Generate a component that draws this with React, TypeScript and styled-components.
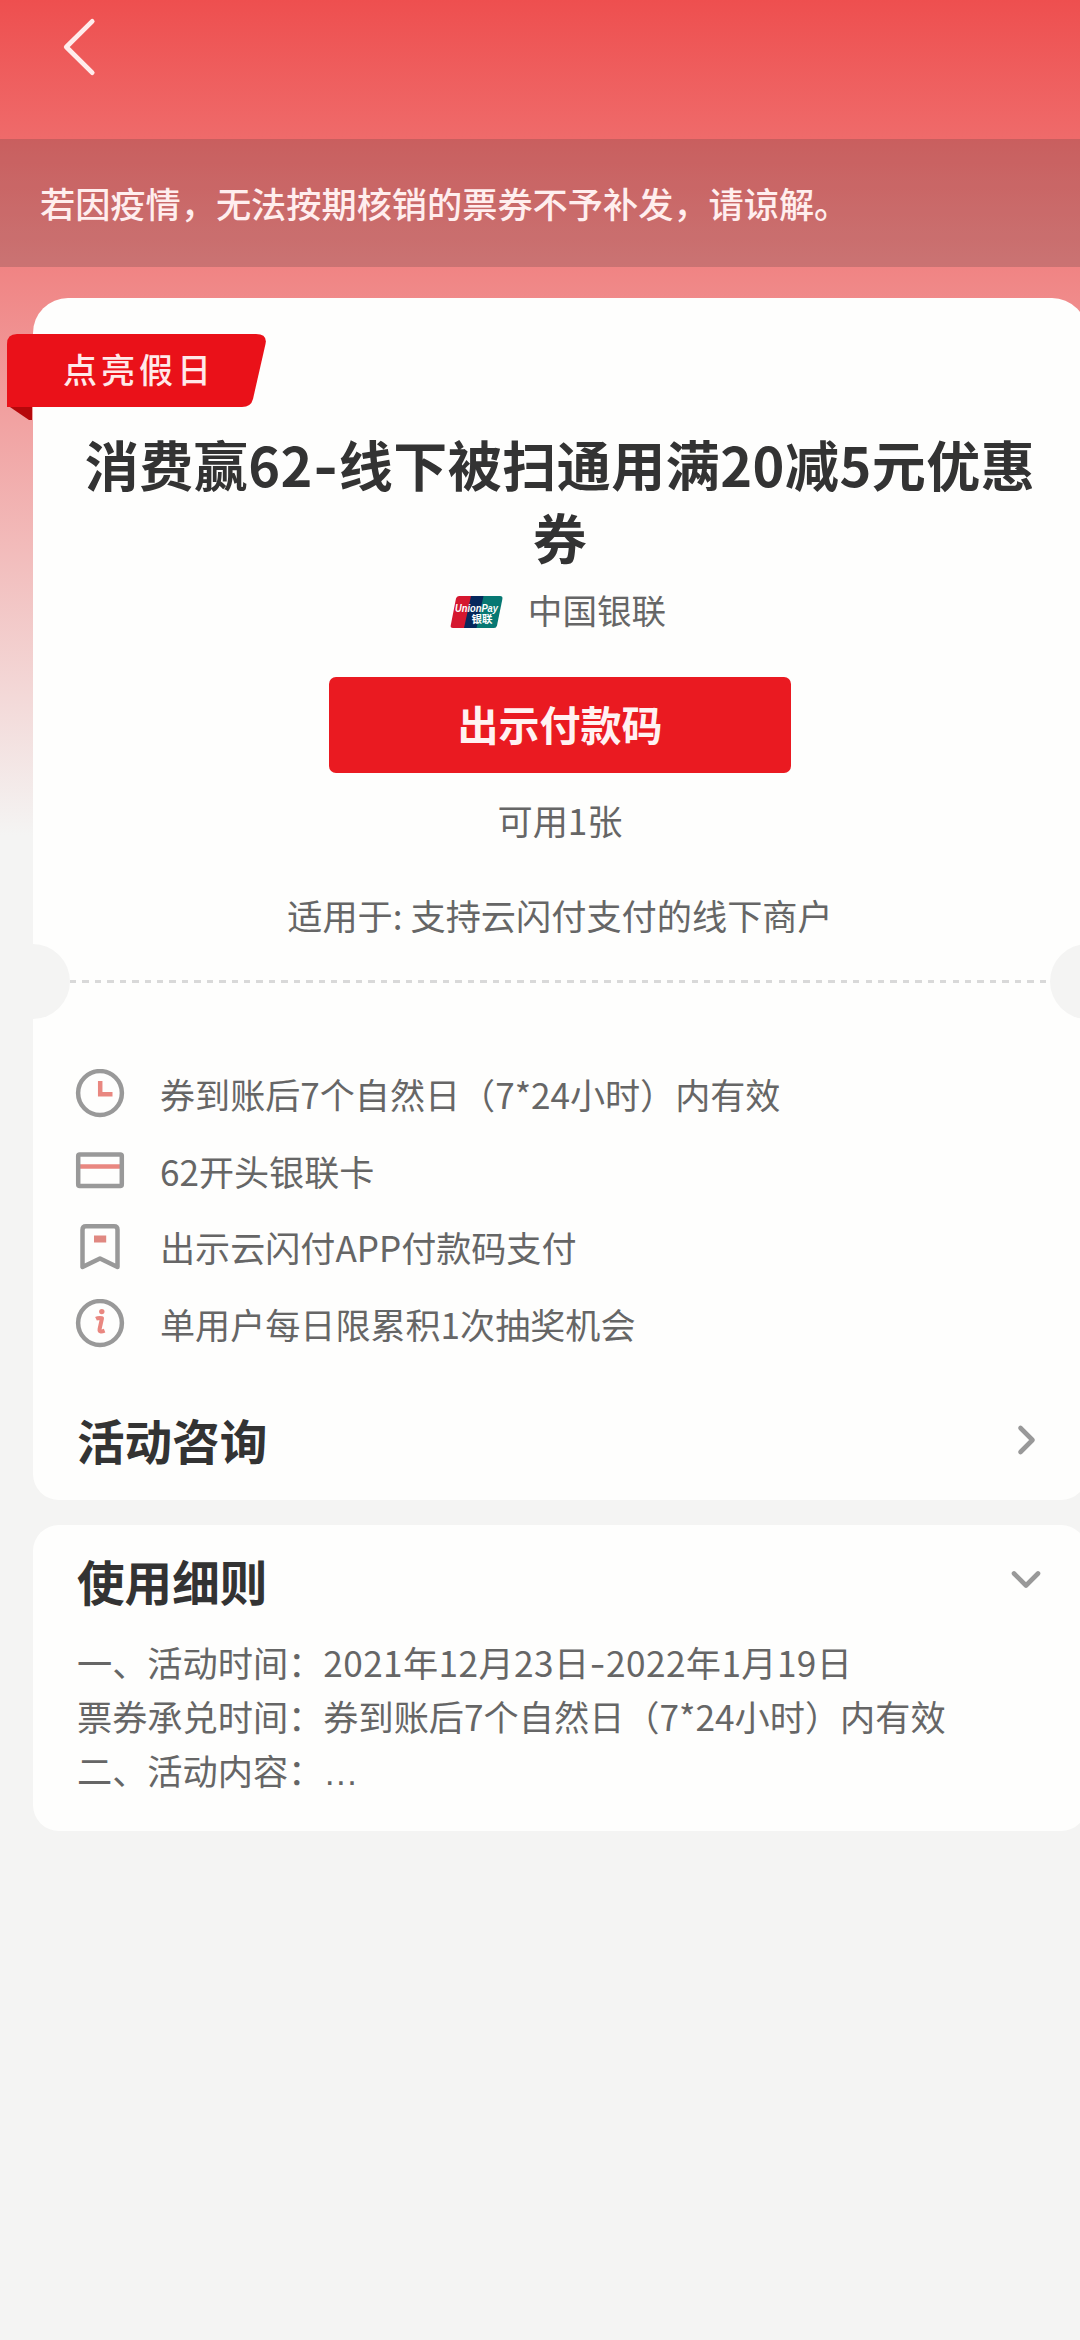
import React from "react";
import styled, { createGlobalStyle } from "styled-components";

const GlobalStyle = createGlobalStyle`
  * { box-sizing: border-box; }
  html, body { margin: 0; padding: 0; background: #f4f4f3; }
  body {
    font-family: "Noto Sans CJK SC", "Noto Sans", sans-serif;
    overflow: hidden;
  }
`;

const Page = styled.div`
  width: 1080px;
  height: 2340px;
  overflow: hidden;
  background: linear-gradient(180deg, #ee4f4f 0, #f4f4f3 835px);
`;

const NavBar = styled.header`
  display: flex;
  height: 139px;
  padding: 18px 0 0 62px;
`;

const BackButton = styled.button`
  display: block;
  width: 36px;
  height: 62px;
  padding: 0;
  border: 0;
  background: none;
`;

const Notice = styled.p`
  margin: 0;
  height: 128px;
  padding-left: 40px;
  background: rgba(51, 51, 51, 0.2);
  color: #ffeeee;
  font-size: 35.2px;
  font-weight: 500;
  line-height: 128px;
  white-space: nowrap;
`;

const Content = styled.main`
  display: flex;
  flex-direction: column;
  gap: 25px;
  width: 1054px;
  margin: 31px 0 0 33px;
`;

const Card = styled.section<{ $topRadius: number }>`
  position: relative;
  display: flex;
  flex-direction: column;
  background: #fefefd;
  border-radius: ${(p) => `${p.$topRadius}px ${p.$topRadius}px 26px 26px`};
`;

const Ribbon = styled.div`
  position: absolute;
  left: -26px;
  top: 35px;
  width: 260px;
  height: 88px;
  color: #ffe9e9;
  font-size: 34px;
  font-weight: 500;
  letter-spacing: 4px;
  line-height: 72px;
`;

const RibbonShape = styled.svg`
  position: absolute;
  inset: 0;
`;

const RibbonText = styled.span`
  position: relative;
  display: block;
  padding-left: 56px;
`;

const Hero = styled.div`
  display: flex;
  flex-direction: column;
  align-items: center;
  padding-top: 129px;
`;

const Title = styled.h1`
  margin: 0;
  width: 960px;
  color: #333;
  font-size: 54px;
  font-weight: 700;
  line-height: 73px;
  letter-spacing: 0.5px;
  text-align: center;
`;

const WideHyphen = styled.span`
  font-family: "Inter", sans-serif;
  line-height: 1;
`;

const Brand = styled.div`
  display: flex;
  align-items: center;
  gap: 25px;
  height: 54px;
  margin: 9px 4px 0 0;
  color: #666;
  font-size: 34.6px;
`;

const BrandLogo = styled.svg`
  margin-top: 5px;
`;

const PayButton = styled.button`
  width: 462px;
  height: 96px;
  margin-top: 41px;
  padding: 0 0 4px;
  border: 0;
  border-radius: 7px;
  background: #ea1a21;
  color: #fff2f2;
  font-family: inherit;
  font-size: 41px;
  font-weight: 700;
`;

const HeroNote = styled.p<{ $gap: number }>`
  margin: ${(p) => p.$gap}px 0 0;
  color: #666;
  font-size: 35.2px;
  line-height: 50px;
`;

const TearLine = styled.div`
  position: relative;
  display: flex;
  align-items: center;
  height: 75px;
  margin: 4px 0 37px;
  padding: 0 37px;
  overflow: hidden;

  &::before,
  &::after {
    content: "";
    position: absolute;
    top: 0;
    width: 75px;
    height: 75px;
    border-radius: 50%;
    background: #f4f4f3;
  }
  &::before { left: -38px; }
  &::after { right: -38px; }
`;

const Dashes = styled.div`
  flex: 1;
  height: 3px;
  background: repeating-linear-gradient(90deg, #d9d9d9 0 6.4px, transparent 6.4px 12.43px);
`;

const InfoList = styled.ul`
  margin: 0;
  padding: 0 0 0 42px;
  list-style: none;
`;

const InfoItem = styled.li`
  display: flex;
  align-items: center;
  gap: 35px;
  height: 76.5px;
  color: #666;
  font-size: 35.1px;
  line-height: 50px;
`;

const SectionHead = styled.div<{ $height: number; $gap?: number }>`
  display: flex;
  align-items: center;
  justify-content: space-between;
  height: ${(p) => p.$height}px;
  margin-top: ${(p) => p.$gap ?? 0}px;
  padding: 0 43px 0 44px;
`;

const SectionTitle = styled.h2`
  margin: 0;
  padding-top: 1px;
  color: #333;
  font-size: 47.6px;
  font-weight: 700;
  line-height: 60px;
`;

const Rules = styled.div`
  padding: 0 44px 33px;
  color: #666;
  font-size: 35.2px;
  line-height: 54.2px;
`;

const RuleLine = styled.p`
  margin: 0;
  white-space: nowrap;
`;

const DateRange = styled.span`
  letter-spacing: 0.4px;
`;

const Ellipsis = styled.span`
  font-family: "Liberation Sans", sans-serif;
  line-height: 1;
`;

const BackIcon = () => (
  <svg width="36" height="62" viewBox="0 0 36 62" fill="none" stroke="#ffecec" strokeWidth="4.8" strokeLinecap="round" strokeLinejoin="round">
    <path d="M30.2 3.4 4.3 29 30.2 54.6" />
  </svg>
);

const UnionPayLogo = () => (
  <BrandLogo width="53" height="34" viewBox="0 0 53 34">
    <path d="M9 1H24L17 33H3Q0 33 .8 30L6 3.5Q6.6 1 9 1Z" fill="#d5172f" />
    <path d="M21 1H36L29 33H14Z" fill="#06285c" />
    <path d="M33.5 1H50Q53 1 52.4 4L47 30.5Q46.4 33 44 33H26.5Z" fill="#077873" />
    <text x="5" y="16.500" fill="#fff" fontFamily="Liberation Sans, sans-serif" fontSize="10.500" fontWeight="700" fontStyle="italic" textLength="43" lengthAdjust="spacingAndGlyphs">UnionPay</text>
    <text x="21.500" y="27.500" fill="#fff" fontFamily="Noto Sans CJK SC, sans-serif" fontSize="10.500" fontWeight="700">银联</text>
  </BrandLogo>
);

const iconProps = {
  width: 50,
  height: 50,
  viewBox: "0 0 50 50",
  fill: "none",
  stroke: "#999",
  strokeWidth: 4.5,
  strokeLinejoin: "round" as const,
};

const ClockIcon = () => (
  <svg {...iconProps}>
    <circle cx="25" cy="24" r="21.9" />
    <path d="M25.2 12V25.2H37.5" stroke="#e98780" strokeLinejoin="miter" />
  </svg>
);

const CardIcon = () => (
  <svg {...iconProps}>
    <path d="M5 20.5H45" stroke="#e98780" />
    <rect x="3.2" y="8.5" width="43.6" height="31.5" rx="1.5" />
  </svg>
);

const BookmarkIcon = () => (
  <svg {...iconProps}>
    <path d="M11 4.2H39Q42.5 4.2 42.5 7.7V45L25 36.5 7.5 45V7.7Q7.5 4.2 11 4.2Z" />
    <path d="M19 17H31.2" stroke="#e08881" strokeWidth="7" />
  </svg>
);

const InfoIcon = () => (
  <svg {...iconProps}>
    <circle cx="25" cy="24" r="21.9" />
    <circle cx="26.8" cy="12.6" r="2.7" fill="#e98780" stroke="none" />
    <path d="M21 19.8Q23.5 18.6 27 19.3L24.6 30Q24 33.8 29.6 31.6" stroke="#e98780" strokeWidth="4" />
  </svg>
);

const Chevron = ({ down = false }: { down?: boolean }) => (
  <svg width="40" height="34" viewBox="0 0 40 34" fill="none" stroke="#999" strokeWidth="4.6" strokeLinecap="round" strokeLinejoin="round">
    <path d={down ? "M10 10.5 22 22.5 34 10.5" : "M16.5 5 28.5 17 16.5 29"} />
  </svg>
);

const infoRows = [
  { icon: <ClockIcon />, text: "券到账后7个自然日（7*24小时）内有效" },
  { icon: <CardIcon />, text: "62开头银联卡" },
  { icon: <BookmarkIcon />, text: "出示云闪付APP付款码支付" },
  { icon: <InfoIcon />, text: "单用户每日限累积1次抽奖机会" },
];

export default function App() {
  return (
    <>
      <GlobalStyle />
      <Page>
        <NavBar>
          <BackButton aria-label="返回">
            <BackIcon />
          </BackButton>
        </NavBar>
        <Notice>若因疫情，无法按期核销的票券不予补发，请谅解。</Notice>
        <Content>
          <Card $topRadius={35}>
            <Ribbon>
              <RibbonShape width="260" height="88" viewBox="0 0 260 88">
                <path d="M0 72H25V87H22Z" fill="#b5080b" />
                <path d="M10 1H249Q260.5 1 258.5 11L246 66Q244 74 235 74H0V11Q0 1 10 1Z" fill="#ea1119" />
              </RibbonShape>
              <RibbonText>点亮假日</RibbonText>
            </Ribbon>
            <Hero>
              <Title>
                消费赢62<WideHyphen>-</WideHyphen>线下被扫通用满20减5元优惠券
              </Title>
              <Brand>
                <UnionPayLogo />
                <span>中国银联</span>
              </Brand>
              <PayButton>出示付款码</PayButton>
              <HeroNote $gap={22}>可用1张</HeroNote>
              <HeroNote $gap={45}>适用于: 支持云闪付支付的线下商户</HeroNote>
            </Hero>
            <TearLine>
              <Dashes />
            </TearLine>
            <InfoList>
              {infoRows.map((row) => (
                <InfoItem key={row.text}>
                  {row.icon}
                  <span>{row.text}</span>
                </InfoItem>
              ))}
            </InfoList>
            <SectionHead $height={121} $gap={17}>
              <SectionTitle>活动咨询</SectionTitle>
              <Chevron />
            </SectionHead>
          </Card>
          <Card $topRadius={26}>
            <SectionHead $height={110}>
              <SectionTitle>使用细则</SectionTitle>
              <Chevron down />
            </SectionHead>
            <Rules>
              <RuleLine>
                一、活动时间：<DateRange>2021年12月23日<WideHyphen>-</WideHyphen>2022年1月19日</DateRange>
              </RuleLine>
              <RuleLine>票券承兑时间：券到账后7个自然日（7*24小时）内有效</RuleLine>
              <RuleLine>
                二、活动内容：<Ellipsis>…</Ellipsis>
              </RuleLine>
            </Rules>
          </Card>
        </Content>
      </Page>
    </>
  );
}
